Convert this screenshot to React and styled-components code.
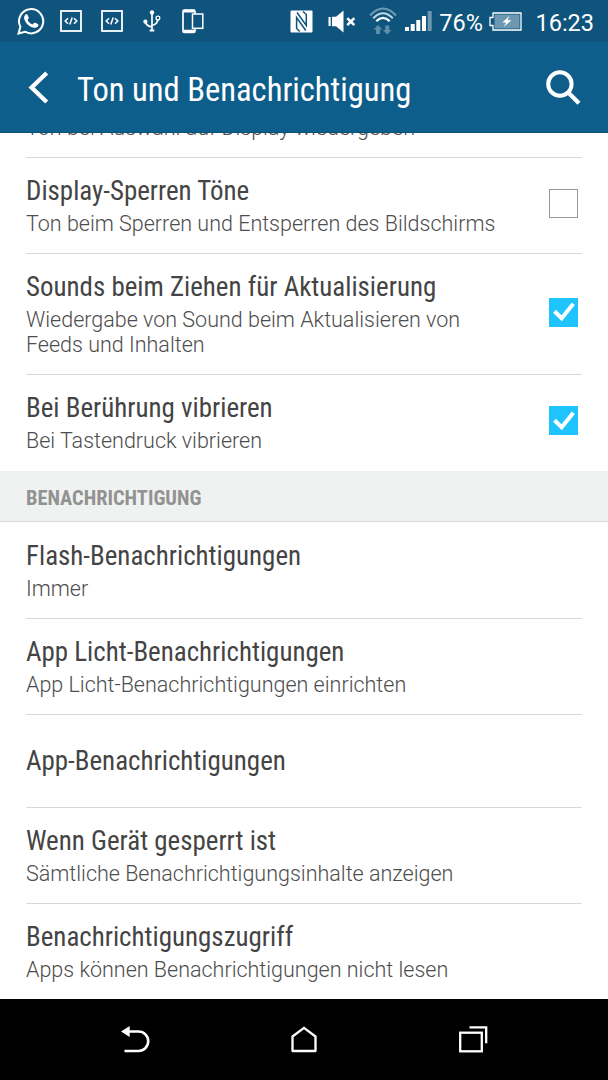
import React from "react";
import styled, { createGlobalStyle } from "styled-components";

const GlobalStyle = createGlobalStyle`
  body {
    margin: 0;
    background: #fff;
  }
`;

const settings = [
  { title: "Display-Sperren Töne", text: "Ton beim Sperren und Entsperren des Bildschirms", height: 96, checkbox: true, checked: false },
  { title: "Sounds beim Ziehen für Aktualisierung", text: "Wiedergabe von Sound beim Aktualisieren von Feeds und Inhalten", height: 121, checkbox: true, checked: true },
  { title: "Bei Berührung vibrieren", text: "Bei Tastendruck vibrieren", height: 96, checkbox: true, checked: true, last: true },
];

const notifications = [
  { title: "Flash-Benachrichtigungen", text: "Immer", height: 97, first: true },
  { title: "App Licht-Benachrichtigungen", text: "App Licht-Benachrichtigungen einrichten", height: 96 },
  { title: "App-Benachrichtigungen", height: 93 },
  { title: "Wenn Gerät gesperrt ist", text: "Sämtliche Benachrichtigungsinhalte anzeigen", height: 96 },
  { title: "Benachrichtigungszugriff", text: "Apps können Benachrichtigungen nicht lesen", height: 96, last: true },
];

const WhatsAppIcon = () => (
  <svg width="28" height="28" viewBox="0 0 28 28" fill="none">
    <path d="M1.5 26.5 3.4 19.8A12.1 12.1 0 1 1 8.1 24.7Z" stroke="#fff" strokeWidth="2" />
    <path d="M8.6 7.4c.6-.5 1.5-.4 1.8.2l1.3 2.9c.2.5 0 .9-.3 1.3l-.9 1.1c1.2 2.2 2.8 3.7 5.1 4.7l1.3-1.5c.4-.5.8-.5 1.3-.3l2.7 1.3c.6.4.6.9.4 1.6-.6 1.6-2.3 2.3-3.9 2.1-5-.8-9.4-4.9-10.3-9.6-.2-1.5.4-2.9 1.5-3.8Z" fill="#fff" />
  </svg>
);

const CodeIcon = () => (
  <svg width="22" height="22" viewBox="0 0 22 22" fill="none" stroke="#fff">
    <rect x="1" y="1" width="20" height="20" strokeWidth="1.8" />
    <path d="M8 8.3 5.2 11l2.8 2.7M14 8.3l2.8 2.7-2.8 2.7M12.2 7.4l-2.4 7.2" strokeWidth="1.5" />
  </svg>
);

const UsbIcon = () => (
  <svg width="18" height="22" viewBox="0 0 18 22" fill="none" stroke="#fff">
    <path d="M9 3v17M2.7 12.5c.4 2.3 2.6 3.8 6.3 4.4M14.7 9.5c0 3.1-1.6 5-5.7 6" strokeWidth="1.7" />
    <circle cx="9" cy="2.5" r="2.2" fill="#fff" stroke="none" />
    <circle cx="2.4" cy="11.7" r="2.1" fill="#fff" stroke="none" />
    <circle cx="14.9" cy="8" r="1.9" strokeWidth="1.3" />
    <path d="M6.7 20.5h4.6" strokeWidth="2" />
  </svg>
);

const DevicesIcon = () => (
  <svg width="22" height="25" viewBox="0 0 22 25" fill="none" stroke="#fff">
    <rect x="1" y="1" width="12" height="22.5" rx="1.5" strokeWidth="1.7" />
    <path d="M1.5 2.2h11M1.5 22.2h11" strokeWidth="2.8" />
    <rect x="10.5" y="5" width="10.3" height="14.3" fill="#0e547d" strokeWidth="1.5" />
  </svg>
);

const NfcIcon = () => (
  <svg width="23" height="23" viewBox="0 0 23 23">
    <rect x=".5" y=".5" width="22" height="22" rx="1" fill="#fff" />
    <path d="M9.8 21.5 6.6 18.5V7.5L15.8 20.5M13 1.500 16.300 4.500v11L7 2.500" fill="none" stroke="#0e547d" strokeWidth="1.5" />
  </svg>
);

const MuteIcon = () => (
  <svg width="28" height="23" viewBox="0 0 28 23" fill="#fff">
    <path d="M.5 7h2.200v9H.5ZM4 6.700h4L15.500.5v22L8 16.300H4Z" />
    <path d="M19.300 8.200l7 7M26.300 8.200l-7 7" stroke="#fff" strokeWidth="2.600" />
  </svg>
);

const WifiIcon = () => (
  <svg width="28" height="28" viewBox="0 0 28 28" fill="none" stroke="#fff">
    <path d="M1 8.5Q14-5.5 27 8.5" stroke="#6e98b1" strokeWidth="2" />
    <path d="M4.2 11.2q9.8-10 19.6 0" stroke="#c3d5df" strokeWidth="2" />
    <path d="M7.3 14.1q6.7-6.5 13.4 0" strokeWidth="2.3" />
    <path d="m9 18 4.5 4.6H11V27H7v-4.4H4.5ZM18.2 27.5l-4.2-4.6h2.3v-4.4h3.9v4.4h2.3Z" fill="#5f8eaa" stroke="none" />
  </svg>
);

const SignalIcon = () => (
  <svg width="27" height="20" viewBox="0 0 27 20" fill="#fff">
    <rect y="16" width="4" height="4" />
    <rect x="5.7" y="13" width="4" height="7" />
    <rect x="11.3" y="9" width="4" height="11" />
    <rect x="17" y="5" width="4" height="15" />
    <rect x="22.7" width="4" height="20" fill="#6e98b1" />
  </svg>
);

const BatteryIcon = () => (
  <svg width="33" height="19" viewBox="0 0 33 19">
    <path d="M4 1h28v17H4v-4.5H1v-8h3Z" fill="none" stroke="#fff" strokeWidth="1.3" />
    <rect x="5.5" y="2.5" width="25" height="14" fill="#6e98b1" />
    <path d="m20.5 4-7.2 6.5h4L14.5 15l8-6.7h-4Z" fill="#fff" />
  </svg>
);

const BackIcon = () => (
  <svg width="21" height="33" viewBox="0 0 21 33" fill="none">
    <path d="M18.7 2 3.6 16.5 18.7 31" stroke="#fff" strokeWidth="4.3" />
  </svg>
);

const SearchIcon = () => (
  <svg width="35" height="36" viewBox="0 0 35 36" fill="none" stroke="#fff">
    <circle cx="13.9" cy="14" r="11.7" strokeWidth="4" />
    <path d="M22.5 22.8 33 33.3" strokeWidth="4.3" />
  </svg>
);

const CheckIcon = () => (
  <svg width="22" height="20" viewBox="0 0 22 20" fill="none">
    <path d="m1.5 9.2 7.2 7L20.3 1.8" stroke="#fff" strokeWidth="4" />
  </svg>
);

const NavBackIcon = () => (
  <svg width="30" height="28" viewBox="0 0 30 28" fill="none">
    <path d="M8 5.5h9.5a9.7 9.7 0 0 1 0 19.5H3.5" stroke="#fff" strokeWidth="2.6" />
    <path d="M0 5.5 8.7 0v11Z" fill="#fff" />
  </svg>
);

const NavHomeIcon = () => (
  <svg width="28" height="28" viewBox="0 0 28 28" fill="none">
    <path d="M1.5 10.5 13 1.8l11.5 8.7V25h-23Z" stroke="#fff" strokeWidth="2.3" strokeLinejoin="round" />
  </svg>
);

const NavRecentIcon = () => (
  <svg width="29" height="28" viewBox="0 0 29 28" fill="none" stroke="#fff" strokeWidth="2.3">
    <rect x="1.2" y="6.7" width="21.6" height="18.6" />
    <path d="M10.5 1.3h16.7v16" />
  </svg>
);

const Item = ({ item }) => (
  <Row $height={item.height} $first={item.first} $last={item.last}>
    <Texts $wide={!item.checkbox}>
      <Title>{item.title}</Title>
      {item.text && <Description>{item.text}</Description>}
    </Texts>
    {item.checkbox && <Checkbox $checked={item.checked}>{item.checked && <CheckIcon />}</Checkbox>}
  </Row>
);

const App = () => {
  return (
    <Screen>
      <GlobalStyle />
      <StatusBar>
        <StatusIcon $left={17}><WhatsAppIcon /></StatusIcon>
        <StatusIcon $left={15}><CodeIcon /></StatusIcon>
        <StatusIcon $left={19}><CodeIcon /></StatusIcon>
        <StatusIcon $left={20}><UsbIcon /></StatusIcon>
        <StatusIcon $left={21}><DevicesIcon /></StatusIcon>
        <Spacer />
        <StatusIcon><NfcIcon /></StatusIcon>
        <StatusIcon $left={15}><MuteIcon /></StatusIcon>
        <StatusIcon $left={13}><WifiIcon /></StatusIcon>
        <StatusIcon $left={8}><SignalIcon /></StatusIcon>
        <StatusText $width={51}>76%</StatusText>
        <StatusIcon $left={6}><BatteryIcon /></StatusIcon>
        <StatusText $width={72}>16:23</StatusText>
      </StatusBar>
      <Header>
        <BackIcon />
        <Heading>Ton und Benachrichtigung</Heading>
        <SearchIcon />
      </Header>
      <List>
        {/* scrolled row, only its last line is still visible */}
        <ScrolledRow>
          <Description>Ton bei Auswahl auf Display wiedergeben</Description>
        </ScrolledRow>
        {settings.map((item) => <Item key={item.title} item={item} />)}
        <Section>BENACHRICHTIGUNG</Section>
        {notifications.map((item) => <Item key={item.title} item={item} />)}
      </List>
      <NavBar>
        <NavBackIcon />
        <NavHomeIcon />
        <NavRecentIcon />
      </NavBar>
    </Screen>
  );
};

const Screen = styled.div`
  display: flex;
  flex-direction: column;
  width: 608px;
  height: 1080px;
  overflow: hidden;
  background: #fff;
  font-family: Roboto, "Liberation Sans", sans-serif;

  svg {
    display: block;
    flex: none;
  }
`;

const StatusBar = styled.div`
  display: flex;
  align-items: center;
  box-sizing: border-box;
  height: 42px;
  padding-right: 14px;
  background: #0e547d;
`;

const StatusIcon = styled.span`
  margin-left: ${(props) => props.$left || 0}px;
`;

const Spacer = styled.div`
  flex: 1;
`;

const StatusText = styled.span`
  width: ${(props) => props.$width}px;
  padding-top: 3px;
  color: #fff;
  font-size: 23.5px;
  line-height: 28px;
  text-align: right;
`;

const Header = styled.div`
  display: flex;
  align-items: center;
  box-sizing: border-box;
  height: 91px;
  padding: 1px 27px 0 28px;
  background: #0e5e8b;
  border-bottom: 1px solid #0c5078;
`;

const Heading = styled.h1`
  flex: 1;
  margin: 4px 0 0 28px;
  color: #fff;
  font-family: "Roboto Condensed", Roboto, sans-serif;
  font-size: 32.6px;
  font-weight: 400;
  line-height: 40px;
`;

const List = styled.div`
  flex: 1;
  overflow: hidden;
`;

const ScrolledRow = styled.div`
  display: flex;
  align-items: flex-end;
  box-sizing: border-box;
  height: 25px;
  margin: 0 26px;
  padding-bottom: 17px;
  border-bottom: 1px solid #d9d9d9;
`;

const Row = styled.div`
  display: flex;
  align-items: center;
  justify-content: space-between;
  box-sizing: border-box;
  height: ${(props) => props.$height}px;
  margin: 0 26px;
  padding: ${(props) => (props.$first ? 1 : 0)}px 4px 0 0;
  border-bottom: 1px solid ${(props) => (props.$last ? "transparent" : "#d9d9d9")};
`;

const Texts = styled.div`
  width: ${(props) => (props.$wide ? "auto" : "480px")};
`;

const Title = styled.div`
  color: #444;
  font-family: "Roboto Condensed", Roboto, sans-serif;
  font-size: 26.95px;
  line-height: 32px;
  white-space: nowrap;
`;

const Description = styled.div`
  margin-top: 5px;
  color: #4d4d4d;
  font-size: 21.5px;
  font-weight: 300;
  line-height: 24.5px;
`;

const Checkbox = styled.div`
  display: flex;
  align-items: center;
  justify-content: center;
  box-sizing: border-box;
  width: 29px;
  height: 29px;
  margin-bottom: 4px;
  border: 1px solid ${(props) => (props.$checked ? "#1fc4ff" : "#999")};
  background: ${(props) => (props.$checked ? "#1fc4ff" : "#fff")};
`;

const Section = styled.div`
  box-sizing: border-box;
  height: 51px;
  padding-left: 26px;
  border-bottom: 1px solid #d5d9d8;
  background: #f0f2f1;
  color: #929292;
  font-family: "Roboto Condensed", Roboto, sans-serif;
  font-size: 20.4px;
  font-weight: 700;
  line-height: 54px;
`;

const NavBar = styled.div`
  display: flex;
  align-items: center;
  justify-content: space-between;
  box-sizing: border-box;
  height: 81px;
  padding: 0 120px 0 121px;
  background: #000;
`;

export default App;
